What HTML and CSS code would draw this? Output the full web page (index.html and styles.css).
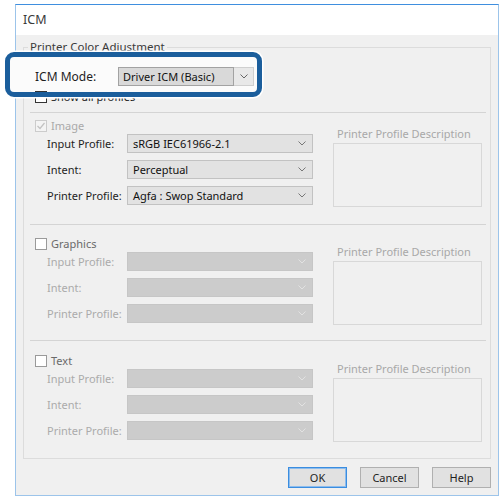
FILE: index.html
```html
<!DOCTYPE html>
<html>
<head>
<meta charset="utf-8">
<link rel="stylesheet" href="styles.css">
</head>
<body>
<div class="window">
  <div class="titlebar">ICM</div>
  <div class="client">
    <div class="hl-fill"></div>
    <fieldset class="group">
      <legend class="group-title">Printer Color Adjustment</legend>
      <div class="mode-row">
        <span class="mode-label">ICM Mode:</span>
        <div class="combo">
          <span class="combo-value">Driver ICM (Basic)</span>
          <span class="combo-arrow"><svg width="8" height="5" viewBox="0 0 8 5"><polyline points="0.5,0.5 4,4 7.5,0.5" fill="none" stroke="#666" stroke-width="1"/></svg></span>
        </div>
      </div>
      <div class="check-row show-all"><span class="box box-dark"></span><span class="check-text">Show all profiles</span></div>

      <section class="sub sub-image">
        <div class="sub-left">
          <div class="check-row"><span class="box box-disabled"><svg width="10" height="10" viewBox="0 0 10 10"><polyline points="1.5,5 4,7.5 8.5,2" fill="none" stroke="#c2c2c2" stroke-width="1.2"/></svg></span><span class="check-text text-disabled">Image</span></div>
          <div class="field"><span class="field-label">Input Profile:</span><div class="select"><span>sRGB IEC61966-2.1</span><svg width="8" height="5" viewBox="0 0 8 5"><polyline points="0.5,0.5 4,4 7.5,0.5" fill="none" stroke="#777" stroke-width="1"/></svg></div></div>
          <div class="field"><span class="field-label">Intent:</span><div class="select"><span>Perceptual</span><svg width="8" height="5" viewBox="0 0 8 5"><polyline points="0.5,0.5 4,4 7.5,0.5" fill="none" stroke="#777" stroke-width="1"/></svg></div></div>
          <div class="field"><span class="field-label">Printer Profile:</span><div class="select"><span>Agfa : Swop Standard</span><svg width="8" height="5" viewBox="0 0 8 5"><polyline points="0.5,0.5 4,4 7.5,0.5" fill="none" stroke="#777" stroke-width="1"/></svg></div></div>
        </div>
        <div class="sub-right">
          <div class="desc-label">Printer Profile Description</div>
          <div class="desc-box"></div>
        </div>
      </section>

      <section class="sub sub-graphics">
        <div class="sub-left">
          <div class="check-row"><span class="box"></span><span class="check-text text-mid">Graphics</span></div>
          <div class="field field-disabled"><span class="field-label">Input Profile:</span><div class="select"><span></span><svg width="8" height="5" viewBox="0 0 8 5"><polyline points="0.5,0.5 4,4 7.5,0.5" fill="none" stroke="#e2e2e2" stroke-width="1"/></svg></div></div>
          <div class="field field-disabled"><span class="field-label">Intent:</span><div class="select"><span></span><svg width="8" height="5" viewBox="0 0 8 5"><polyline points="0.5,0.5 4,4 7.5,0.5" fill="none" stroke="#e2e2e2" stroke-width="1"/></svg></div></div>
          <div class="field field-disabled"><span class="field-label">Printer Profile:</span><div class="select"><span></span><svg width="8" height="5" viewBox="0 0 8 5"><polyline points="0.5,0.5 4,4 7.5,0.5" fill="none" stroke="#e2e2e2" stroke-width="1"/></svg></div></div>
        </div>
        <div class="sub-right">
          <div class="desc-label">Printer Profile Description</div>
          <div class="desc-box"></div>
        </div>
      </section>

      <section class="sub sub-text">
        <div class="sub-left">
          <div class="check-row"><span class="box"></span><span class="check-text text-mid">Text</span></div>
          <div class="field field-disabled"><span class="field-label">Input Profile:</span><div class="select"><span></span><svg width="8" height="5" viewBox="0 0 8 5"><polyline points="0.5,0.5 4,4 7.5,0.5" fill="none" stroke="#e2e2e2" stroke-width="1"/></svg></div></div>
          <div class="field field-disabled"><span class="field-label">Intent:</span><div class="select"><span></span><svg width="8" height="5" viewBox="0 0 8 5"><polyline points="0.5,0.5 4,4 7.5,0.5" fill="none" stroke="#e2e2e2" stroke-width="1"/></svg></div></div>
          <div class="field field-disabled"><span class="field-label">Printer Profile:</span><div class="select"><span></span><svg width="8" height="5" viewBox="0 0 8 5"><polyline points="0.5,0.5 4,4 7.5,0.5" fill="none" stroke="#e2e2e2" stroke-width="1"/></svg></div></div>
        </div>
        <div class="sub-right">
          <div class="desc-label">Printer Profile Description</div>
          <div class="desc-box"></div>
        </div>
      </section>
    </fieldset>
    <div class="buttons">
      <button class="btn btn-default">OK</button>
      <button class="btn">Cancel</button>
      <button class="btn">Help</button>
    </div>
    <div class="hl-frame"></div>
  </div>
</div>
</body>
</html>
```
FILE: styles.css
```css
html, body {
  margin: 0;
  background: #ffffff;
}
body {
  font-family: "Noto Sans", "Open Sans", "Liberation Sans", sans-serif;
  font-size: 11px;
  color: #1e1e1e;
}
.window {
  margin: 4px 0 0 15px;
  width: 484px;
  box-sizing: border-box;
  border: 1px solid #9cc4ea;
  border-top-color: #3f8fdf;
}
.titlebar {
  height: 30px;
  line-height: 30px;
  padding-left: 7px;
  background: #ffffff;
  font-size: 12.5px;
  color: #3a3a3a;
}
.client {
  position: relative;
  background: #f0f0f0;
  padding: 5px 7px 7px;
}
.hl-fill {
  position: absolute;
  z-index: 1;
  left: -11px;
  top: 17px;
  width: 257px;
  height: 45px;
  border-radius: 9px;
  background: #fbfbfb;
}
.hl-frame {
  position: absolute;
  z-index: 3;
  left: -11px;
  top: 17px;
  width: 257px;
  height: 45px;
  box-sizing: border-box;
  border: 5px solid #1b5e9c;
  border-radius: 9px;
  box-shadow: 0 0 0 1.5px #ffffff;
}
.group {
  margin: 0;
  padding: 0;
  min-width: 0;
  border: 1px solid #dcdcdc;
}
.group-title {
  position: relative;
  z-index: 2;
  margin-left: 4px;
  padding: 0 2px;
  font-size: 11.5px;
  line-height: 14px;
  color: #3a3a3a;
}
.mode-row {
  position: relative;
  z-index: 2;
  display: flex;
  align-items: center;
  height: 19px;
  margin-top: 13px;
  padding-left: 11px;
}
.mode-label {
  width: 83px;
  font-size: 12px;
  color: #1e1e1e;
}
.combo {
  display: flex;
  height: 19px;
}
.combo-value {
  width: 116px;
  box-sizing: border-box;
  border: 1px solid #a2a2a2;
  background: #d9d9d9;
  padding-left: 4px;
  line-height: 17px;
  font-size: 11px;
  color: #111;
}
.combo-arrow {
  width: 20px;
  box-sizing: border-box;
  border: 1px solid #cfcfcf;
  border-left: none;
  background: #e8e8e8;
  display: flex;
  align-items: center;
  justify-content: center;
}
.check-row {
  display: flex;
  align-items: center;
  height: 12px;
  gap: 4px;
}
.show-all {
  position: relative;
  z-index: 2;
  margin-top: 5px;
  padding-left: 11px;
}
.box {
  width: 12px;
  height: 12px;
  box-sizing: border-box;
  border: 1px solid #9a9a9a;
  background: #ffffff;
  display: flex;
  align-items: center;
  justify-content: center;
}
.box-dark {
  border-color: #333333;
}
.box-disabled {
  border-color: #cccccc;
  background: #f4f4f4;
}
.check-text {
  line-height: 12px;
  color: #1e1e1e;
}
.text-disabled {
  color: #a9a9a9;
}
.text-mid {
  color: #6a6a6a;
}
.sub {
  display: flex;
  box-sizing: border-box;
  margin: 0 4px 0 6px;
  border-top: 1px solid #d4d4d4;
}
.sub-image {
  margin-top: 9px;
  height: 112px;
  padding-top: 7px;
}
.sub-graphics {
  height: 116px;
  padding-top: 13px;
}
.sub-text {
  height: 118px;
  padding-top: 14px;
}
.sub-left {
  padding-left: 5px;
}
.field {
  display: flex;
  align-items: center;
  padding-left: 12px;
  margin-top: 7px;
}
.check-row + .field {
  margin-top: 2px;
}
.field-label {
  width: 80px;
  color: #1e1e1e;
}
.select {
  width: 186px;
  height: 19px;
  box-sizing: border-box;
  border: 1px solid #c2c2c2;
  background: #e2e2e2;
  display: flex;
  align-items: center;
  justify-content: space-between;
  padding: 0 6px 0 5px;
  color: #111;
}
.field-disabled .field-label {
  color: #ababab;
}
.field-disabled .select {
  background: #cccccc;
  border-color: #c6c6c6;
}
.sub-right {
  margin-left: 20px;
  padding-top: 8px;
  width: 149px;
}
.desc-label {
  padding-left: 4px;
  line-height: 12px;
  color: #a8a8a8;
}
.desc-box {
  margin-top: 3px;
  height: 64px;
  box-sizing: border-box;
  border: 1px solid #d8d8d8;
}
.buttons {
  display: flex;
  justify-content: flex-end;
  gap: 13px;
  margin-top: 8px;
}
.btn {
  width: 59px;
  height: 21px;
  padding: 0;
  box-sizing: border-box;
  border: 1px solid #b0b0b0;
  background: #e1e1e1;
  font-family: inherit;
  font-size: 11px;
  color: #1e1e1e;
}
.btn-default {
  border-color: #3a8de0;
  box-shadow: inset 0 0 0 1px #8dbcec;
}
```
